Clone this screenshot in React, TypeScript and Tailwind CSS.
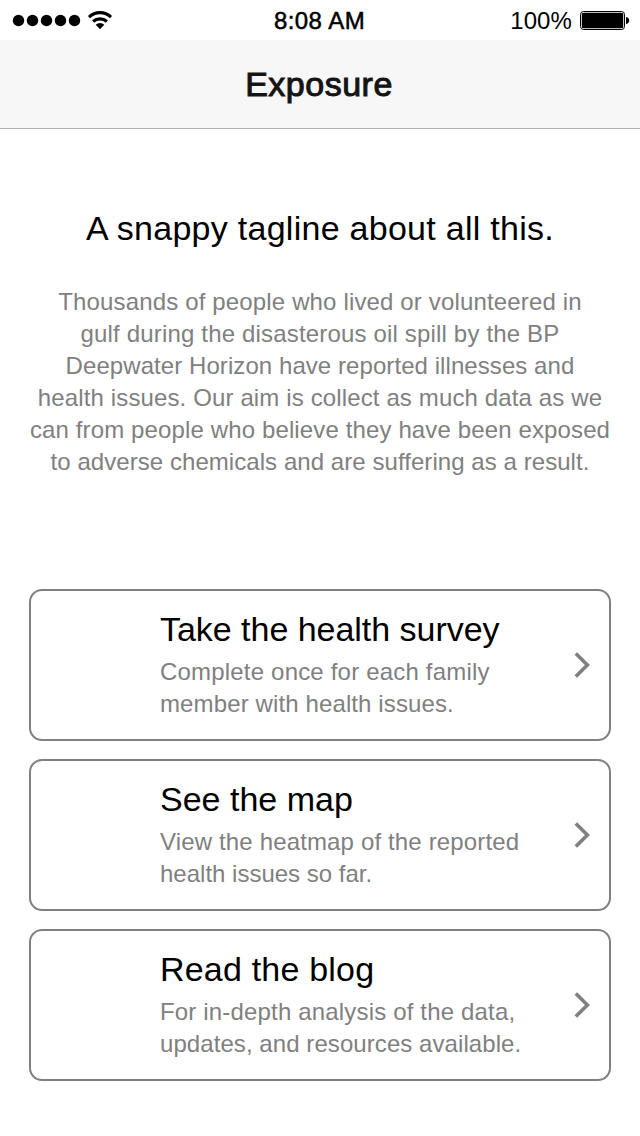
import React from "react";

const intro = [
  { text: "Thousands of people who lived or volunteered in", tracking: "tracking-[0.15px]" },
  { text: "gulf during the disasterous oil spill by the BP", tracking: "tracking-[0.17px]" },
  { text: "Deepwater Horizon have reported illnesses and", tracking: "tracking-[0.07px]" },
  { text: "health issues. Our aim is collect as much data as we", tracking: "tracking-[0.13px]" },
  { text: "can from people who believe they have been exposed", tracking: "tracking-[0.13px]" },
  { text: "to adverse chemicals and are suffering as a result.", tracking: "tracking-[0.06px]" },
];

const cards = [
  {
    title: "Take the health survey",
    tracking: "tracking-[-0.03px]",
    lines: [
      { text: "Complete once for each family", tracking: "tracking-[0.19px]" },
      { text: "member with health issues.", tracking: "tracking-[0.12px]" },
    ],
  },
  {
    title: "See the map",
    tracking: "tracking-[0px]",
    lines: [
      { text: "View the heatmap of the reported", tracking: "tracking-[0.15px]" },
      { text: "health issues so far.", tracking: "tracking-[0px]" },
    ],
  },
  {
    title: "Read the blog",
    tracking: "tracking-[0.2px]",
    lines: [
      { text: "For in-depth analysis of the data,", tracking: "tracking-[0.17px]" },
      { text: "updates, and resources available.", tracking: "tracking-[0.07px]" },
    ],
  },
];

type CardProps = (typeof cards)[number];

function StatusBar() {
  return (
    <div className="grid h-10 grid-cols-[1fr_auto_1fr] text-[24px] leading-[42px] text-black">
      <div className="flex h-10">
        <svg width="120" height="40" viewBox="0 0 120 40" aria-hidden="true">
          {[18.5, 32.5, 46.5, 60.5, 74.5].map((x) => (
            <circle key={x} cx={x} cy="20.5" r="5.7" />
          ))}
          <g fill="none" stroke="black" strokeWidth="3.2">
            <path d="M89 17.1a16 16 0 0 1 22 0" />
            <path d="M93.1 21.5a10.2 10.2 0 0 1 13.8 0" />
          </g>
          <path d="M100 29.2l-4.3-4.5a6.2 6.2 0 0 1 8.6 0z" />
        </svg>
      </div>
      <div className="h-10 pr-[1px] tracking-[0.45px] [-webkit-text-stroke:0.5px_black]">8:08 AM</div>
      <div className="flex h-10 justify-end">
        <span className="tracking-[0.1px]">100%</span>
        <svg width="68" height="40" viewBox="0 0 68 40" aria-hidden="true">
          <rect x="8.5" y="11.5" width="44" height="18" rx="3" fill="none" stroke="black" />
          <rect x="9.8" y="12.8" width="41.4" height="15.4" rx="1.5" />
          <path d="M54 17c2.7.6 3.2 2 3.2 3.5s-.5 2.9-3.2 3.5z" />
        </svg>
      </div>
    </div>
  );
}

function Card({ title, tracking, lines }: CardProps) {
  return (
    <button className="flex h-[152px] w-full items-center justify-between rounded-[13px] border-2 border-[#808080] pr-[17px] pl-[129px] text-left">
      <span className="flex flex-col gap-[7px] self-start pt-[18px]">
        <span className={"block text-[34px] leading-[40px] whitespace-nowrap text-black " + tracking}>{title}</span>
        <span className="block text-[24px] leading-[32px] whitespace-nowrap text-[#808080]">
          {lines.map((line) => (
            <span key={line.text} className={"block " + line.tracking}>{line.text}</span>
          ))}
        </span>
      </span>
      <svg width="18" height="28" viewBox="0 0 18 28" fill="none" stroke="#808080" strokeWidth="3.6" aria-hidden="true">
        <path d="M1.8 2.4L13.4 14L1.8 25.6" />
      </svg>
    </button>
  );
}

export default function App() {
  return (
    <div className="flex h-[1136px] w-[640px] flex-col overflow-hidden bg-white font-['Liberation_Sans',Arial,sans-serif]">
      <StatusBar />
      <header className="flex h-[89px] items-start justify-center border-b border-[#b2b2b2] bg-[#f7f7f7] pt-[24px] pr-[2px]">
        <h1 className="text-[34px] leading-[40px] tracking-[0.5px] text-[#141414] [-webkit-text-stroke:1px_#141414]">Exposure</h1>
      </header>
      <main className="flex flex-col px-[29px] pt-[79px]">
        <h2 className="text-center text-[34px] leading-[40px] tracking-[0.27px] text-black">A snappy tagline about all this.</h2>
        <p className="mt-[38px] text-center text-[24px] leading-[32px] text-[#808080]">
          {intro.map(({ text, tracking }) => (
            <span key={text} className={"block whitespace-nowrap " + tracking}>{text}</span>
          ))}
        </p>
        <div className="mt-[111px] flex flex-col gap-[18px]">
          {cards.map((card) => (
            <Card key={card.title} {...card} />
          ))}
        </div>
      </main>
    </div>
  );
}
